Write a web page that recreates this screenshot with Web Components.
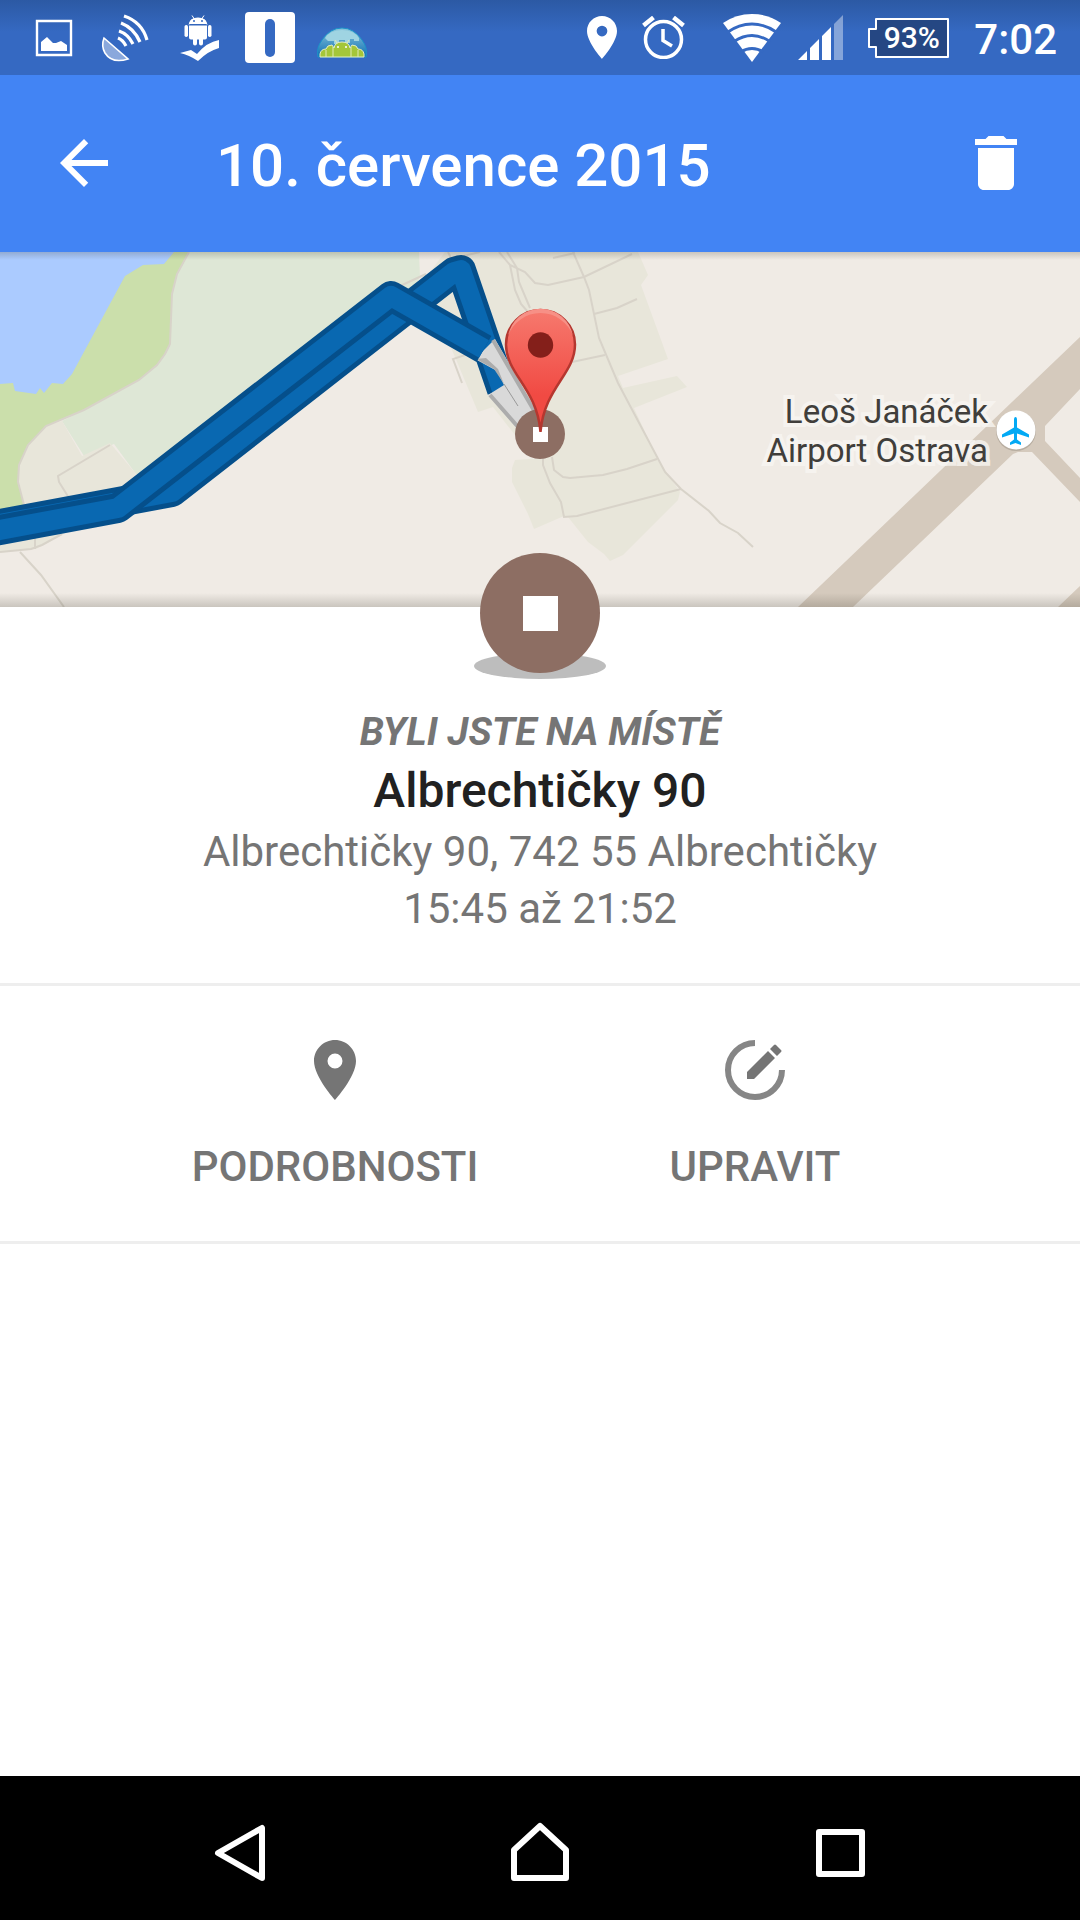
<!DOCTYPE html>
<html lang="cs">
<head>
<meta charset="utf-8">
<meta name="viewport" content="width=device-width, initial-scale=1">
<title>10. července 2015</title>
<style>
    body {
        margin: 0;
        font-family: Roboto, "Noto Sans", sans-serif;
        background: #fff;
        color: #757575;
    }

    timeline-screen {
        min-height: 100vh;
    }
</style>
</head>
<body>
<timeline-screen>
    <status-bar slot="top" battery="93%" time="7:02"></status-bar>
    <app-header slot="top">10. července 2015</app-header>
    <route-map></route-map>
    <place-card>
        <span slot="kicker">BYLI JSTE NA MÍSTĚ</span>
        <span slot="name">Albrechtičky 90</span>
        <span slot="address">Albrechtičky 90, 742 55 Albrechtičky</span>
        <span slot="time">15:45 až 21:52</span>
    </place-card>
    <place-actions>
        <action-button>
            <svg slot="icon" width="72" height="72" viewBox="0 0 24 24" fill="#757575">
                <path d="M12 2C8.13 2 5 5.13 5 9c0 5.25 7 13 7 13s7-7.75 7-13c0-3.87-3.13-7-7-7zm0 9.5a2.5 2.5 0 0 1 0-5 2.5 2.5 0 0 1 0 5z"/>
            </svg>
            PODROBNOSTI
        </action-button>
        <action-button>
            <svg slot="icon" width="72" height="72" viewBox="0 0 72 72">
                <path d="M36 9A27 27 0 1 0 63 36" fill="none" stroke="#868686" stroke-width="6"/>
                <path d="M28 38v7h7l21-21-7-7zM51 15l7 7 4-4q1-1 0-2l-5-5q-1-1-2 0z" fill="#757575"/>
            </svg>
            UPRAVIT
        </action-button>
    </place-actions>
    <nav-bar slot="bottom"></nav-bar>
</timeline-screen>

<script>
class TimelineScreen extends HTMLElement {
    connectedCallback() {
        this.attachShadow({ mode: 'open' });
        this.shadowRoot.innerHTML = `
            <style>
                :host {
                    display: flex;
                    flex-direction: column;
                }

                main {
                    flex: 1;
                }
            </style>
            <slot name="top"></slot>
            <main><slot></slot></main>
            <slot name="bottom"></slot>
        `;
    }
}

class StatusBar extends HTMLElement {
    connectedCallback() {
        this.attachShadow({ mode: 'open' });
        this.shadowRoot.innerHTML = `
            <style>
                :host {
                    display: flex;
                    justify-content: space-between;
                    height: 75px;
                    padding: 0 23px 0 18px;
                    background: linear-gradient(#2c59a4, #3569c2 32px);
                    color: #fff;
                    font-weight: 500;
                }

                .notifications, .system, .signal {
                    display: flex;
                    align-items: center;
                }

                .notifications svg {
                    width: 72px;
                    height: 75px;
                }

                .system {
                    gap: 25px;
                }

                .signal {
                    gap: 17px;
                    padding-left: 13px;
                }

                .battery {
                    position: relative;
                    display: flex;
                    width: 81px;
                    height: 40px;
                }

                .battery svg {
                    position: absolute;
                    inset: 0;
                }

                .battery span {
                    position: relative;
                    flex: 1;
                    padding-left: 6px;
                    font-size: 30px;
                    line-height: 40px;
                    text-align: center;
                }

                time {
                    padding-top: 4px;
                    font-size: 42px;
                    line-height: 60px;
                }
            </style>
            <div class="notifications">
                <svg viewBox="0 0 72 75">
                    <path d="M19 21h34v34H19z" fill="none" stroke="#fff" stroke-width="2.4"/>
                    <path d="M23 51v-9l6-5 6 6h3l5-2 6 4v6z" fill="#fff"/>
                </svg>
                <svg viewBox="0 0 72 75">
                    <path d="M14 38L38 59Q22 64 15 53Q11 46 14 38z" fill="#8aa8dc" stroke="#fff" stroke-width="1.6"/>
                    <path d="M28 38q5 2 8 8M29 31q9 3 14 13M31 23q13 5 19 19M34 16q18 6 23 24" fill="none" stroke="#fff" stroke-width="3.2"/>
                </svg>
                <svg viewBox="0 0 72 75" fill="#fff">
                    <path d="M27 24.500q1-5 5-6l-2-3M45 24.500q-1-5-5-6l2-3" fill="none" stroke="#fff"/>
                    <path d="M27 24q1-6.500 9-6.500t9 6.500zM27 25.500h18v12q0 2-2 2h-2v4q0 2-2 2t-2-2v-4h-2v4q0 2-2 2t-2-2v-4h-2q-2 0-2-2z"/>
                    <rect x="22.500" y="25" width="3.500" height="12" rx="1.700"/>
                    <rect x="46" y="25" width="3.500" height="12" rx="1.700"/>
                    <circle cx="32" cy="21" r="1" fill="#3569c2"/>
                    <circle cx="40" cy="21" r="1" fill="#3569c2"/>
                    <path d="M18 53l11-3 6 4q10-12 22-14v8q-11 3-21 13-9-6-18-8z"/>
                </svg>
                <svg viewBox="0 0 72 75">
                    <rect x="11" y="12" width="50" height="51" rx="4" fill="#fff"/>
                    <rect x="31" y="19" width="10" height="38" rx="5" fill="#3569c2"/>
                </svg>
                <svg viewBox="0 0 72 75">
                    <defs>
                        <linearGradient id="dome" x1="0" y1="0" x2="0" y2="1">
                            <stop offset="0" stop-color="#8cc8dc"/>
                            <stop offset="1" stop-color="#0f6fb5"/>
                        </linearGradient>
                    </defs>
                    <path d="M12 57q-2-9 4-17 8-12 20-12t20 12q6 8 4 17z" fill="url(#dome)" stroke="#1b93c9"/>
                    <path d="M19 38q5-8 17-8t17 8v3h-5v-2h-4v4h-5v-3h-6v4h-5v-3h-6z" fill="#9fd4e2"/>
                    <path d="M14 57v-3q1-5 6-5 1-4 6-4l2 3q1-6 8-6t8 6l2-3q5 0 6 4 5 0 6 5v3z" fill="#a4c639" stroke="#e5edc4"/>
                    <path d="M27 57V47M45 57V47M20 57v-7M52 57v-7M31 43l-2-3M41 43l2-3" stroke="#dfeab8" fill="none"/>
                    <circle cx="32" cy="47" r="1" fill="#fff"/>
                    <circle cx="40" cy="47" r="1" fill="#fff"/>
                </svg>
            </div>
            <div class="system">
                <svg width="30" height="43" viewBox="5 2 14 20" fill="#fff">
                    <path d="M12 2C8.130 2 5 5.130 5 9c0 5.250 7 13 7 13s7-7.750 7-13c0-3.870-3.130-7-7-7zm0 9.500a2.500 2.500 0 0 1 0-5 2.500 2.500 0 0 1 0 5z"/>
                </svg>
                <svg width="43" height="43" viewBox="0 0 43 43" fill="none" stroke="#fff">
                    <circle cx="21.500" cy="23.500" r="18" stroke-width="3.500"/>
                    <path d="M21 13v11.500l9 5.500" stroke-width="3.500"/>
                    <path d="M1.500 9.500l10-8M31.500 1.500l10 8" stroke-width="4.500"/>
                </svg>
                <div class="signal">
                    <svg width="58" height="48" viewBox="0 0 58 48">
                        <path d="M29 48L0 9Q13 0 29 0t29 9z" fill="#fff"/>
                        <path d="M4 18.500Q16 10 29 10t25 8.500M11 27.500Q20 21.500 29 21.500t18 6M18 38Q23 34.500 29 34.500t11 3.500" fill="none" stroke="#3569c2" stroke-width="2.800"/>
                    </svg>
                    <svg width="45" height="45" viewBox="0 0 45 45" fill="#fff">
                        <path d="M0 45l9-9v9zM12 45V33l9-9v21zM24 45V21l9-9v33z"/>
                        <path d="M36 45V9l9-9v45z" opacity=".4"/>
                    </svg>
                </div>
                <div class="battery">
                    <svg width="81" height="40" viewBox="0 0 81 40">
                        <path d="M8 1h72v38H8V29H1V11h7z" fill="#254783" stroke="#fff" stroke-width="2" stroke-linejoin="round"/>
                    </svg>
                    <span>${this.getAttribute('battery')}</span>
                </div>
                <time>${this.getAttribute('time')}</time>
            </div>
        `;
    }
}

class AppHeader extends HTMLElement {
    connectedCallback() {
        this.attachShadow({ mode: 'open' });
        this.shadowRoot.innerHTML = `
            <style>
                :host {
                    display: flex;
                    align-items: center;
                    height: 175px;
                    padding: 0 48px 2px;
                    background: #4284f4;
                    color: #fff;
                }

                h1 {
                    flex: 1;
                    margin: 0;
                    padding: 6px 0 0 96px;
                    font-size: 60px;
                    font-weight: 500;
                    line-height: 72px;
                }

                button {
                    display: block;
                    padding: 0;
                    border: 0;
                    background: none;
                    cursor: pointer;
                }

                svg {
                    display: block;
                    width: 72px;
                    height: 72px;
                    fill: #fff;
                }
            </style>
            <button type="button" aria-label="Zpět">
                <svg viewBox="0 0 24 24"><path d="M20 11H7.830l5.590-5.590L12 4l-8 8 8 8 1.410-1.410L7.830 13H20v-2z"/></svg>
            </button>
            <h1><slot></slot></h1>
            <button type="button" aria-label="Smazat">
                <svg viewBox="0 0 24 24"><path d="M6 19c0 1.100.9 2 2 2h8c1.100 0 2-.9 2-2V7H6v12zM19 4h-3.500l-1-1h-5l-1 1H5v2h14V4z"/></svg>
            </button>
        `;
    }
}

class RouteMap extends HTMLElement {
    connectedCallback() {
        this.attachShadow({ mode: 'open' });
        this.shadowRoot.innerHTML = `
            <style>
                :host {
                    display: block;
                    background: #f0ebe5;
                }

                svg {
                    display: block;
                    width: 100%;
                    height: 355px;
                }

                .roads {
                    fill: none;
                    stroke: #d8d3c9;
                    stroke-width: 2;
                }

                .route {
                    fill: none;
                    stroke-linejoin: round;
                }

                .edge {
                    stroke: #054f8b;
                    stroke-width: 30;
                }

                .core {
                    stroke: #0968b1;
                    stroke-width: 20;
                }

                text {
                    font-size: 33px;
                    fill: #403e3b;
                    stroke: #f8f6f2;
                    stroke-opacity: .8;
                    stroke-width: 8;
                    paint-order: stroke;
                    text-anchor: end;
                }
            </style>
            <svg viewBox="0 0 1080 355" preserveAspectRatio="xMidYMid slice">
                <defs>
                    <linearGradient id="pin" x1="0" y1="0" x2="0" y2="1">
                        <stop offset="0" stop-color="#f6796e"/>
                        <stop offset=".7" stop-color="#f14a43"/>
                    </linearGradient>
                    <linearGradient id="shade" x1="0" y1="0" x2="0" y2="1">
                        <stop offset="0" stop-color="#302c20" stop-opacity="0"/>
                        <stop offset="1" stop-color="#302c20" stop-opacity=".2"/>
                    </linearGradient>
                    <linearGradient id="shadeTop" x1="0" y1="1" x2="0" y2="0">
                        <stop offset="0" stop-color="#302c20" stop-opacity="0"/>
                        <stop offset="1" stop-color="#302c20" stop-opacity=".2"/>
                    </linearGradient>
                </defs>
                <rect width="1080" height="355" fill="#f0ebe5"/>

                <!-- woods, lake shore and lake -->
                <path d="M189 0H419L420 25 400 60 160 222H136L114 192 84 204 62 169 84 158 100 60z" fill="#dee7d6"/>
                <path d="M0 0H189L177 22 172 42 170 92 165 102 157 113 139 128 84 158 46 174 28 193 19 213 18 230 24 253 0 262z" fill="#cbdfab"/>
                <path d="M0 0H174L164 12 143 13 125 24 72 122 63 132 52 131 44 141 40 136 36 142 15 139 13 131 0 132z" fill="#abcbff"/>

                <!-- built-up areas -->
                <path d="M46 174L62 169 82 204 110 191 136 222 110 250 62 283 36 297 0 300V258L24 253 18 230 19 213 28 193z" fill="#e8e6da"/>
                <path d="M445 0H638L648 23 641 33 668 107 618 124 623 136 677 124 687 135 634 156 657 206 680 240 678 248 623 303 610 309 604 302 588 290 568 265 564 264 534 277 528 262 512 230V216L515 208 543 206 515 183 493 155 478 160 455 105 436 62 430 20z" fill="#e8e6da"/>

                <g class="roads">
                    <path d="M189 0L177 22 172 42 170 92 165 102 157 113 139 128 84 158 46 174 28 193 19 213 18 230 24 253"/>
                    <path d="M110 193L58 224 59 230 69 246M0 300L31 297 42 293 62 282M35 285V297M20 300L41 323 64 355"/>
                    <path d="M573 0L584 25 589 38 594 62 599 86 618 131 665 220 681 237 709 259 720 271 738 281 753 295"/>
                    <path d="M632 2L584 25 548 33 535 31 525 20 510 13 499 0M507 0L517 16 519 30 530 56M510 13L515 38 521 52 528 60"/>
                    <path d="M637 47L617 56 594 62M605 103L572 110M553 6L575 1M400 34L426 22M448 0L452 8M455 6L480 0"/>
                    <path d="M657 207L627 217 603 223 570 226 563 225 554 218 552 205M681 237L577 264 564 265 561 250 550 231 543 213V200M462 131L453 107 468 102"/>
                </g>

                <!-- airport runways -->
                <path d="M1080 85L798 355H853L1013 202 1018 200H1032L1080 250V226L1045 189V174L1080 137zM1058 355L1080 334V355z" fill="#d5cabd"/>

                <g class="route">
                    <path class="edge" d="M-20 276L0 272 172 240 454 20 461 18 502 138"/>
                    <path class="core" d="M-20 276L0 272 172 240 454 20 461 18 502 138"/>
                    <path d="M475 107L495 87 540 165 520 180 488 143 504 133 497 119z" fill="#d9d9d9"/>
                    <path d="M493 88L536 162M490 143L519 176" stroke="#acacac" stroke-width="4"/>
                    <path d="M476 107L494 117 504 132 498 117 486 106z" fill="#acacac"/>
                    <path d="M504 132L518 154" stroke="#999"/>
                    <path class="edge" d="M-20 282L0 278 118 256 391 44 484 97"/>
                    <path class="core" d="M-20 282L0 278 118 256 391 44 484 97"/>
                </g>

                <!-- stop marker with the pin on top -->
                <circle cx="540" cy="182" r="25" fill="#8d6e63"/>
                <rect x="533" y="175" width="15" height="15" fill="#fff"/>
                <path d="M540.500 180C537 136 506 122 506 92.500A34.500 34.500 0 0 1 575 92.500C575 122 544 136 540.500 180z" fill="url(#pin)" stroke="#b5372f" stroke-width="2.500"/>
                <path d="M508 84A33 33 0 0 1 573 84A34.500 34.500 0 0 0 508 84z" fill="#f79086"/>
                <circle cx="540.500" cy="93" r="12.700" fill="#841f1a"/>

                <text x="988" y="171">Leoš Janáček</text>
                <text x="988" y="210">Airport Ostrava</text>
                <circle cx="1016" cy="179" r="20" fill="#b8aea1"/>
                <circle cx="1016" cy="178" r="19.500" fill="#fff"/>
                <path d="M1014 168q0-3 1.500-3t1.500 3v7.500l12 7v3l-12-4v6l4 3v2.500l-5.500-2-5.500 2v-2.500l4-3v-6l-12 4v-3l12-7z" fill="#03a9f4"/>

                <rect width="1080" height="8" fill="url(#shadeTop)"/>
                <rect y="341" width="1080" height="14" fill="url(#shade)"/>
            </svg>
        `;
    }
}

class PlaceCard extends HTMLElement {
    connectedCallback() {
        this.attachShadow({ mode: 'open' });
        this.shadowRoot.innerHTML = `
            <style>
                :host {
                    display: flex;
                    flex-direction: column;
                    align-items: center;
                    padding-bottom: 46px;
                    border-bottom: 3px solid #eee;
                    text-align: center;
                }

                /* the badge straddles the bottom edge of the map */
                .badge {
                    display: block;
                    position: relative;
                    margin: -54px 0 26px;
                }

                h2, p {
                    margin: 0;
                }

                .kicker {
                    font-size: 39px;
                    font-style: italic;
                    font-weight: 700;
                    line-height: 54px;
                }

                h2 {
                    color: #212121;
                    font-size: 48px;
                    font-weight: 500;
                    line-height: 64px;
                }

                .line {
                    font-size: 42px;
                    line-height: 57px;
                }
            </style>
            <svg class="badge" width="132" height="126" viewBox="0 0 132 126">
                <ellipse cx="66" cy="113" rx="66" ry="13" fill="#bdbdbd"/>
                <circle cx="66" cy="60" r="60" fill="#8d6e63"/>
                <rect x="49" y="43" width="35" height="35" fill="#fff"/>
            </svg>
            <p class="kicker"><slot name="kicker"></slot></p>
            <h2><slot name="name"></slot></h2>
            <p class="line"><slot name="address"></slot></p>
            <p class="line"><slot name="time"></slot></p>
        `;
    }
}

class PlaceActions extends HTMLElement {
    connectedCallback() {
        this.attachShadow({ mode: 'open' });
        this.shadowRoot.innerHTML = `
            <style>
                :host {
                    display: grid;
                    grid-template-columns: repeat(2, minmax(0, 420px));
                    justify-content: center;
                    padding-left: 10px;
                    border-bottom: 3px solid #eee;
                }
            </style>
            <slot></slot>
        `;
    }
}

class ActionButton extends HTMLElement {
    connectedCallback() {
        this.attachShadow({ mode: 'open' });
        this.shadowRoot.innerHTML = `
            <style>
                :host {
                    display: block;
                }

                button {
                    display: flex;
                    flex-direction: column;
                    align-items: center;
                    gap: 31px;
                    width: 100%;
                    padding: 48px 0 44px;
                    border: 0;
                    background: none;
                    color: inherit;
                    font: inherit;
                    font-size: 42px;
                    font-weight: 500;
                    line-height: 60px;
                    cursor: pointer;
                }

                ::slotted(svg) {
                    display: block;
                }
            </style>
            <button type="button">
                <slot name="icon"></slot>
                <span><slot></slot></span>
            </button>
        `;
    }
}

class NavBar extends HTMLElement {
    connectedCallback() {
        this.attachShadow({ mode: 'open' });
        this.shadowRoot.innerHTML = `
            <style>
                :host {
                    display: grid;
                    grid-template-columns: repeat(3, 1fr);
                    height: 144px;
                    padding: 0 90px;
                    background: #000;
                }

                button {
                    display: flex;
                    align-items: center;
                    justify-content: center;
                    padding: 6px 0 0;
                    border: 0;
                    background: none;
                    cursor: pointer;
                }

                svg {
                    width: 60px;
                    height: 60px;
                    fill: none;
                    stroke: #fff;
                    stroke-width: 6;
                    stroke-linejoin: round;
                }
            </style>
            <button type="button" aria-label="Zpět">
                <svg viewBox="0 0 60 60"><path d="M52 7v50L8 32z"/></svg>
            </button>
            <button type="button" aria-label="Domů">
                <svg viewBox="0 0 60 60"><path d="M30 5l26 24v28H4V29z"/></svg>
            </button>
            <button type="button" aria-label="Přehled">
                <svg viewBox="0 0 60 60"><path d="M9 11h43v42H9z"/></svg>
            </button>
        `;
    }
}

customElements.define('timeline-screen', TimelineScreen);
customElements.define('status-bar', StatusBar);
customElements.define('app-header', AppHeader);
customElements.define('route-map', RouteMap);
customElements.define('place-card', PlaceCard);
customElements.define('place-actions', PlaceActions);
customElements.define('action-button', ActionButton);
customElements.define('nav-bar', NavBar);
</script>
</body>
</html>
